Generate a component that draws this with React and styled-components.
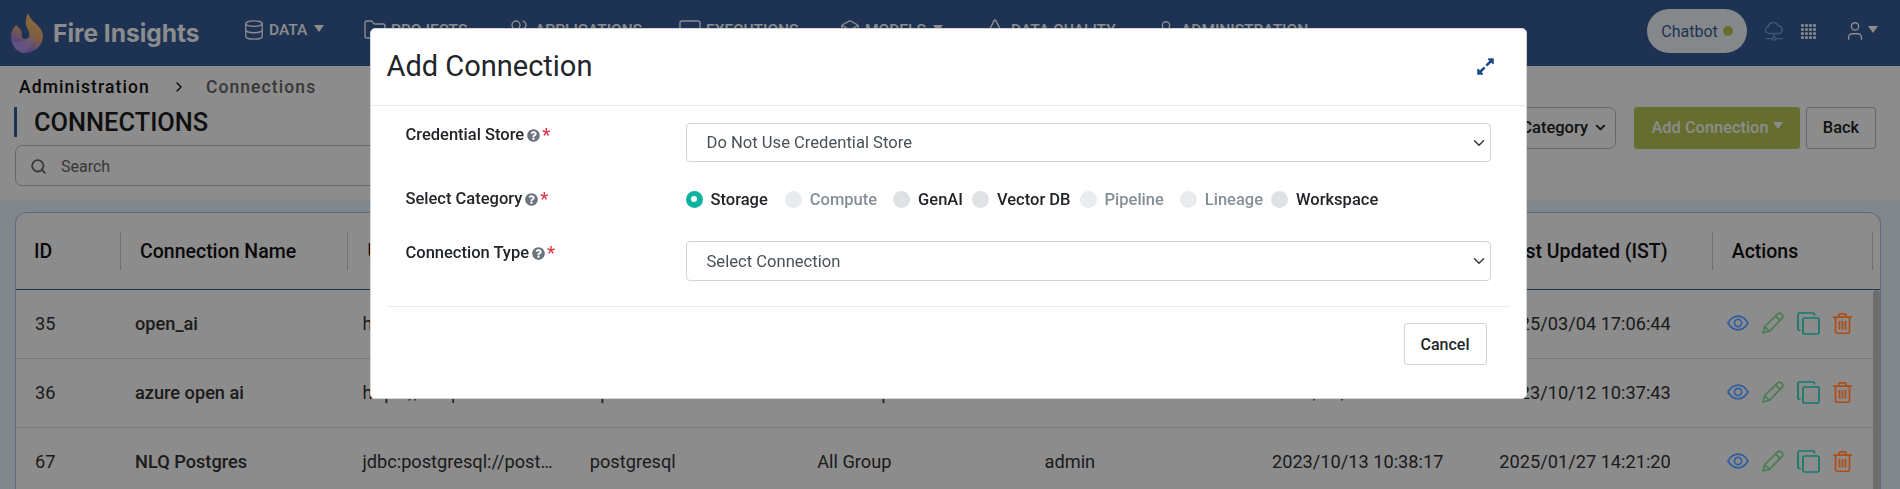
import React from 'react';
import styled, { createGlobalStyle } from 'styled-components';
import {
  Database, Folder, Users, Monitor, Box, Cone, User, Search, ChevronRight, ChevronDown,
} from 'lucide-react';
import { FaQuestionCircle, FaExpandAlt } from 'react-icons/fa';

const GlobalStyle = createGlobalStyle`
  html, body {
    margin: 0;
    height: 100%;
    overflow: hidden;
    background: #fff;
    font-family: Roboto, "Liberation Sans", sans-serif;
  }
  * { box-sizing: border-box; }
`;

const Header = styled.header`
  height: 66px;
  background: #375d99;
  display: flex;
  align-items: flex-start;
  color: #fff;
`;

const Brand = styled.div`
  width: 243px;
  height: 66px;
  padding: 12px 0 0 11px;
  display: flex;
  gap: 10px;
`;

const BrandName = styled.span`
  font-family: Inter, "Noto Sans", sans-serif;
  font-weight: 700;
  font-size: 24.5px;
  line-height: 42px;
  color: #fff;
`;

const Nav = styled.nav`
  display: flex;
  height: 60px;
  align-items: center;
`;

const NavItem = styled.a`
  display: flex;
  align-items: center;
  gap: 4px;
  width: ${p => p.$w}px;
  font-size: 15.5px;
  font-weight: 500;
  color: #fff;
  white-space: nowrap;
`;

const Caret = styled.span`
  width: 0;
  height: 0;
  margin-left: ${p => p.$gap ?? 3}px;
  margin-top: -4px;
  border-left: 5.5px solid transparent;
  border-right: 5.5px solid transparent;
  border-top: 7px solid currentColor;
`;

const HeaderRight = styled.div`
  margin-left: auto;
  height: 62px;
  padding-right: 22px;
  display: flex;
  align-items: center;
  gap: 17px;
`;

const Chatbot = styled.div`
  width: 100px;
  height: 44px;
  border-radius: 22px;
  background: #f3f8fb;
  color: #375d99;
  font-size: 16px;
  font-weight: 400;
  display: flex;
  align-items: center;
  justify-content: center;
  gap: 5px;
`;

const StatusDot = styled.span`
  width: 10px;
  height: 10px;
  border-radius: 50%;
  background: #b9c855;
`;

const UserMenu = styled.div`
  margin-left: 11px;
  display: flex;
  align-items: center;
  gap: 2px;
`;

const Main = styled.main`
  height: 134px;
  padding: 12px 24px 0 15px;
  display: grid;
  grid-template-columns: 1fr auto;
`;

const Crumbs = styled.div`
  padding-left: 4px;
  height: 18px;
  display: flex;
  align-items: center;
  font-size: 17.5px;
  font-weight: 500;
  letter-spacing: 1.1px;
  color: #111;
`;

const CrumbCurrent = styled.span`
  color: #666;
  margin-left: 19px;
`;

const CrumbSep = styled.span`
  margin-left: 21px;
  display: flex;
`;

const PageTitle = styled.h1`
  margin: 11px 0 8px -1px;
  padding-left: 17px;
  border-left: 3px solid #375d99;
  height: 30px;
  font-size: 25.4px;
  line-height: 30px;
  font-weight: 500;
  color: #1d1d1d;
`;

const SearchBox = styled.div`
  height: 41px;
  border: 1px solid #bbb;
  border-radius: 7px;
  padding: 1px 0 0 14px;
  display: flex;
  align-items: center;
  gap: 14px;
  font-size: 16px;
  color: #666;
`;

const LeftHead = styled.div``;

const Toolbar = styled.div`
  margin-top: 29px;
  display: flex;
  align-items: flex-start;
`;

const CategoryPicker = styled.div`
  height: 42px;
  width: 190px;
  padding: 0 7px 2px 0;
  border: 1px solid #bbb;
  border-radius: 7px;
  display: flex;
  align-items: center;
  justify-content: flex-end;
  gap: 5px;
  font-size: 16.5px;
  font-weight: 500;
  color: #222;
`;

const AddButton = styled.button`
  margin-left: 18px;
  width: 166px;
  height: 42px;
  padding: 0 0 2px;
  border: 0;
  border-radius: 3px;
  background: #b9c855;
  color: #fff;
  font: 500 16.4px Roboto, sans-serif;
  display: flex;
  align-items: center;
  justify-content: center;
`;

const BackButton = styled.button`
  margin-left: 6px;
  width: 70px;
  height: 42px;
  padding: 0 0 2px;
  border: 1px solid #bbb;
  border-radius: 3px;
  background: #fff;
  color: #222;
  font: 500 16.4px Roboto, sans-serif;
`;

const TableStrip = styled.section`
  height: 289px;
  padding: 12px 19px 0 15px;
  background: #e7f5ff;
`;

const Card = styled.div`
  height: 277px;
  background: #fff;
  border: 1px solid #a9c3e3;
  border-bottom: 0;
  border-radius: 12px 12px 0 0;
`;

const HeadRow = styled.div`
  height: 77px;
  padding-top: 19px;
  border-bottom: 1px solid #375d99;
  display: grid;
  grid-template-columns: 105px repeat(7, 227.4px) 160px;
`;

const HeadCell = styled.div`
  height: 38px;
  padding-left: ${p => p.$first ? 18 : 19}px;
  border-right: 1px solid #ccc;
  display: flex;
  align-items: center;
  font-size: 19.5px;
  font-weight: 500;
  color: #111;
  white-space: nowrap;
`;

const BodyWrap = styled.div`
  display: flex;
`;

const Rows = styled.div`
  width: 1857px;
`;

const ScrollTrack = styled.div`
  width: 8px;
  height: 200px;
  background: #c6c6c6;
  border-radius: 4px 4px 0 0;
`;

const Row = styled.div`
  height: 69px;
  padding-bottom: 2px;
  border-bottom: 1px solid #ddd;
  display: grid;
  grid-template-columns: 105px repeat(7, 227.4px) 160px;
  align-items: center;
  font-size: 18.2px;
  color: #333;
`;

const Cell = styled.div`
  padding: 0 0 0 ${p => p.$first ? 19 : 14}px;
  font-weight: ${p => p.$strong ? 500 : 400};
  white-space: nowrap;
`;

/* sits above the backdrop: the reference keeps these strokes stronger than the dimmed page */
const Actions = styled.div`
  position: relative;
  z-index: 2;
  padding-left: 14px;
  display: flex;
  align-items: center;
  gap: 13px;
`;

const Backdrop = styled.div`
  position: fixed;
  z-index: 1;
  inset: 0;
  background: rgba(0, 0, 0, .45);
  display: flex;
  justify-content: center;
  padding: 28px 0 0 0;
`;

const Modal = styled.div`
  position: relative;
  left: -2px;
  width: 1157px;
  height: 371px;
  background: #fff;
  border: 1px solid #d5d5d5;
  border-radius: 5px;
  display: flex;
  flex-direction: column;
`;

const ModalHead = styled.div`
  height: 77px;
  padding: 0 31px 2px 16px;
  border-bottom: 1px solid #e9ecef;
  display: flex;
  align-items: center;
  justify-content: space-between;
  color: #1f4a8a;
`;

const ModalTitle = styled.h2`
  margin: 0;
  font-size: 29px;
  font-weight: 400;
  color: #212529;
`;

const ModalBody = styled.div`
  padding: 17px 35px 0 35px;
`;

const FormRow = styled.div`
  display: grid;
  grid-template-columns: 280px 1fr;
  margin-bottom: ${p => p.$mb}px;
`;

const Label = styled.label`
  align-self: start;
  height: 24px;
  font-size: 16.5px;
  font-weight: 500;
  line-height: 24px;
  color: #212529;
  display: flex;
  align-items: center;
  gap: 3px;
`;

const Required = styled.span`
  color: #dc3545;
  font-size: 18px;
  margin-left: -1px;
`;

const Select = styled.select`
  width: 100%;
  height: ${p => p.$h}px;
  padding: 0 40px 0 20px;
  border: 1px solid #ced4da;
  border-radius: 4px;
  background: #fff url("data:image/svg+xml,%3csvg xmlns='http://www.w3.org/2000/svg' viewBox='0 0 16 16'%3e%3cpath fill='none' stroke='%23343a40' stroke-linecap='round' stroke-linejoin='round' stroke-width='2' d='M2 5l6 6 6-6'/%3e%3c/svg%3e") no-repeat right 5px center / 12px 12px;
  appearance: none;
  font: 400 16.6px Roboto, sans-serif;
  color: #495057;
`;

const RadioGroup = styled.div`
  display: flex;
  align-items: center;
  height: 24px;
`;

const RadioItem = styled.label`
  display: flex;
  align-items: center;
  gap: 8px;
  margin-right: ${p => p.$after}px;
  font-size: 16.5px;
  font-weight: 500;
  color: ${p => p.$disabled ? '#868e96' : '#212529'};
`;

const RadioDisc = styled.span`
  width: 17px;
  height: 17px;
  border-radius: 50%;
  background: ${p => p.$checked ? '#0db39e' : p.$disabled ? '#e9ecef' : '#dee2e6'};
  display: flex;
  align-items: center;
  justify-content: center;
  &::after {
    content: '';
    display: ${p => p.$checked ? 'block' : 'none'};
    width: 6px;
    height: 6px;
    border-radius: 50%;
    background: #fff;
  }
`;

const ModalDivider = styled.hr`
  margin: 0 16px;
  border: 0;
  border-top: 1px solid #e9ecef;
`;

const ModalFoot = styled.div`
  padding: 16px 39px 0 0;
  display: flex;
  justify-content: flex-end;
`;

const CancelButton = styled.button`
  width: 83px;
  height: 42px;
  background: #fff;
  border: 1px solid #ced4da;
  border-radius: 3px;
  font: 500 16px Roboto, sans-serif;
  color: #212529;
`;

const FlameLogo = () => (
  <svg width="32" height="42" viewBox="0 0 32 42">
    <defs>
      <linearGradient id="flameFill" x1="0.75" y1="0" x2="0.3" y2="1">
        <stop offset="0" stopColor="#ffc86a" />
        <stop offset="0.5" stopColor="#e8a878" />
        <stop offset="0.8" stopColor="#a67fe0" />
        <stop offset="1" stopColor="#9a74e6" />
      </linearGradient>
    </defs>
    <path
      d="M17 1C14 8 14 13 17 18C20 23 18 27 14 27C11 27 10 24 11 21C10 17 7 15 5 13C1 17 0 21 0 25C0 34 6 41 14 41C24 41 32 33 32 24C32 14 20 11 17 1Z"
      fill="url(#flameFill)"
    />
    <path d="M1 29c7 3 15 1 22-6-1 9-5 16-11 18C7 40 3 35 1 29z" fill="#c9b4f5" opacity=".5" />
  </svg>
);

const CloudNet = () => (
  <svg width="20" height="20" viewBox="0 0 20 20" fill="none" stroke="#6f9fdc" strokeWidth="1.4">
    <path d="M5 12.5a3.6 3.6 0 0 1-.6-7.1 5 5 0 0 1 9.6-.6 3.9 3.9 0 0 1 1 7.7H5z" />
    <path d="M10 12.5V16M1 17.6h7M12 17.6h7" />
    <circle cx="10" cy="17.6" r="1.7" />
  </svg>
);

const GridDots = () => (
  <svg width="15" height="15" viewBox="0 0 15 15" fill="#fff" opacity=".95">
    {[1.5, 5.5, 9.5, 13.5].flatMap(y =>
      [1.5, 5.5, 9.5, 13.5].map(x => <circle key={`${x}-${y}`} cx={x} cy={y} r="1.6" />)
    )}
  </svg>
);

const EyeIcon = () => (
  <svg width="22" height="16" viewBox="0 0 22 16" fill="none" stroke="#2f5da0" strokeWidth="1.7">
    <path d="M1 8c2.600-4.400 6-6.800 10-6.800S18.400 3.600 21 8c-2.600 4.400-6 6.800-10 6.800S3.600 12.400 1 8z" />
    <circle cx="11" cy="8" r="3.600" />
  </svg>
);

const PencilIcon = () => (
  <svg width="22" height="22" viewBox="0 0 22 22" fill="none" stroke="#4a7d50" strokeWidth="1.7" strokeLinejoin="round">
    <path d="M1 21l1.700-6.500L15.800 1.800a2.400 2.400 0 0 1 3.400 0l1 1a2.400 2.400 0 0 1 0 3.400L7.500 19.300z" />
    <path d="M2.700 14.500l4.800 4.800M13.500 4l4.500 4.500" />
  </svg>
);

const CopyIcon = () => (
  <svg width="23" height="23" viewBox="0 0 23 23" fill="none" stroke="#12796c" strokeWidth="1.7">
    <rect x="6" y="6" width="16" height="16" rx="1.500" />
    <path d="M3.500 18.500H2.500A1.500 1.500 0 0 1 1 17V2.500A1.500 1.500 0 0 1 2.500 1H16a1.500 1.500 0 0 1 1.500 1.500V3.500" />
  </svg>
);

const TrashIcon = () => (
  <svg width="19" height="21" viewBox="0 0 19 21" fill="none" stroke="#b04c14" strokeWidth="1.7">
    <path d="M0 4.200h19M6 4V2.200A1.400 1.400 0 0 1 7.400.8h4.200A1.400 1.400 0 0 1 13 2.200V4" />
    <path d="M2.500 4.200v14.300a1.800 1.800 0 0 0 1.800 1.800h10.400a1.800 1.800 0 0 0 1.800-1.800V4.200" />
    <path d="M6.500 8v8.500M9.500 8v8.500M12.500 8v8.500" />
  </svg>
);

const columns = ['ID', 'Connection Name', 'URL', 'Connection Type', 'Group', 'Owner', 'Created (IST)', 'Last Updated (IST)', 'Actions'];

const rows = [
  { id: 35, name: 'open_ai', url: 'https://api.openai.com…', type: 'openai', group: 'All Group', owner: 'admin', created: '2023/10/12 10:30:51', updated: '2025/03/04 17:06:44' },
  { id: 36, name: 'azure open ai', url: 'https://ai-openai.azur…', type: 'openai', group: 'All Group', owner: 'admin', created: '2023/10/12 10:37:43', updated: '2023/10/12 10:37:43' },
  { id: 67, name: 'NLQ Postgres', url: 'jdbc:postgresql://post…', type: 'postgresql', group: 'All Group', owner: 'admin', created: '2023/10/13 10:38:17', updated: '2025/01/27 14:21:20' },
];

const categories = [
  { label: 'Storage', checked: true, after: 17 },
  { label: 'Compute', disabled: true, after: 16 },
  { label: 'GenAI', after: 9 },
  { label: 'Vector DB', after: 9 },
  { label: 'Pipeline', disabled: true, after: 16 },
  { label: 'Lineage', disabled: true, after: 8 },
  { label: 'Workspace', after: 0 },
];

const Hint = () => <FaQuestionCircle size={13} color="#6c757d" />;

const App = () => (
  <>
    <GlobalStyle />
    <Header>
      <Brand>
        <FlameLogo />
        <BrandName>Fire Insights</BrandName>
      </Brand>
      <Nav>
        <NavItem $w={120}><Database size={22} strokeWidth={1.4} />DATA<Caret /></NavItem>
        <NavItem $w={144}><Folder size={24} strokeWidth={1.4} />PROJECTS</NavItem>
        <NavItem $w={171}><Users size={24} strokeWidth={1.4} />APPLICATIONS</NavItem>
        <NavItem $w={161}><Monitor size={24} strokeWidth={1.4} />EXECUTIONS</NavItem>
        <NavItem $w={144}><Box size={22} strokeWidth={1.4} />MODELS<Caret /></NavItem>
        <NavItem $w={172}><Cone size={24} strokeWidth={1.4} />DATA QUALITY</NavItem>
        <NavItem $w={170}><User size={22} strokeWidth={1.4} />ADMINISTRATION</NavItem>
      </Nav>
      <HeaderRight>
        <Chatbot>Chatbot<StatusDot /></Chatbot>
        <CloudNet />
        <GridDots />
        <UserMenu>
          <User size={22} strokeWidth={1.5} />
          <Caret $gap={0} />
        </UserMenu>
      </HeaderRight>
    </Header>

    <Main>
      <LeftHead>
        <Crumbs>
          Administration
          <CrumbSep><ChevronRight size={16} /></CrumbSep>
          <CrumbCurrent>Connections</CrumbCurrent>
        </Crumbs>
        <PageTitle>CONNECTIONS</PageTitle>
        <SearchBox><Search size={17} strokeWidth={2.6} />Search</SearchBox>
      </LeftHead>
      <Toolbar>
        <CategoryPicker>Category<ChevronDown size={15} strokeWidth={3} /></CategoryPicker>
        <AddButton>Add Connection<Caret $gap={4} /></AddButton>
        <BackButton>Back</BackButton>
      </Toolbar>
    </Main>

    <TableStrip>
      <Card>
        <HeadRow>
          {columns.map((c, i) => <HeadCell key={c} $first={i === 0}>{c}</HeadCell>)}
        </HeadRow>
        <BodyWrap>
          <Rows>
            {rows.map(r => (
              <Row key={r.id}>
                <Cell $first>{r.id}</Cell>
                <Cell $strong>{r.name}</Cell>
                <Cell>{r.url}</Cell>
                <Cell>{r.type}</Cell>
                <Cell>{r.group}</Cell>
                <Cell>{r.owner}</Cell>
                <Cell>{r.created}</Cell>
                <Cell>{r.updated}</Cell>
                <Actions>
                  <EyeIcon />
                  <PencilIcon />
                  <CopyIcon />
                  <TrashIcon />
                </Actions>
              </Row>
            ))}
          </Rows>
          <ScrollTrack />
        </BodyWrap>
      </Card>
    </TableStrip>

    <Backdrop>
      <Modal>
        <ModalHead>
          <ModalTitle>Add Connection</ModalTitle>
          <FaExpandAlt size={19} />
        </ModalHead>
        <ModalBody>
          <FormRow $mb={25}>
            <Label>Credential Store <Hint /><Required>*</Required></Label>
            <Select $h={39} defaultValue="none">
              <option value="none">Do Not Use Credential Store</option>
            </Select>
          </FormRow>
          <FormRow $mb={30}>
            <Label>Select Category <Hint /><Required>*</Required></Label>
            <RadioGroup>
              {categories.map(c => (
                <RadioItem key={c.label} $after={c.after} $disabled={c.disabled}>
                  <RadioDisc $checked={c.checked} $disabled={c.disabled} />
                  {c.label}
                </RadioItem>
              ))}
            </RadioGroup>
          </FormRow>
          <FormRow $mb={25}>
            <Label>Connection Type <Hint /><Required>*</Required></Label>
            <Select $h={40} defaultValue="">
              <option value="">Select Connection</option>
            </Select>
          </FormRow>
        </ModalBody>
        <ModalDivider />
        <ModalFoot>
          <CancelButton>Cancel</CancelButton>
        </ModalFoot>
      </Modal>
    </Backdrop>
  </>
);

export default App;
